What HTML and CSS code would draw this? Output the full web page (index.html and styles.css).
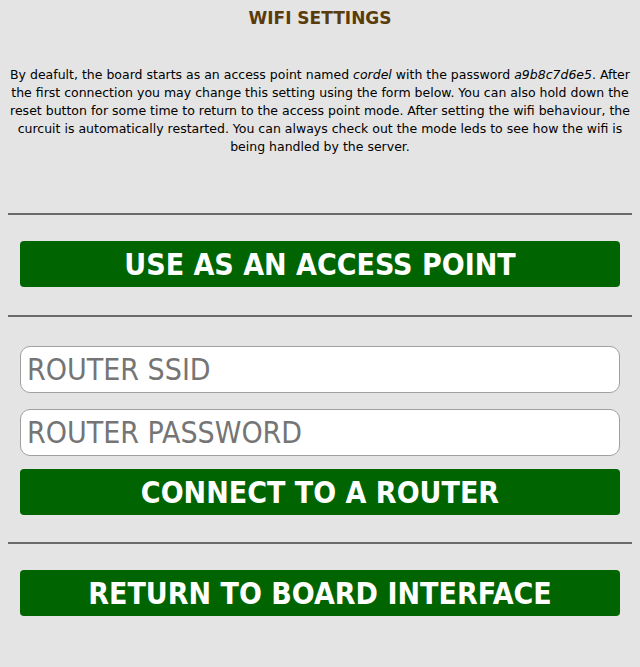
FILE: index.html
```html
<!DOCTYPE html>
<html>
<head>
<meta charset="utf-8">
<link rel="stylesheet" href="styles.css">
</head>
<body>
<div class="page">
  <h1 class="title">WIFI SETTINGS</h1>
  <p class="intro">By deafult, the board starts as an access point named <i>cordel</i> with the password <i>a9b8c7d6e5</i>. After the first connection you may change this setting using the form below. You can also hold down the reset button for some time to return to the access point mode. After setting the wifi behaviour, the curcuit is automatically restarted. You can always check out the mode leds to see how the wifi is being handled by the server.</p>
  <hr class="sep first">
  <div class="block">
    <button class="btn">USE AS AN ACCESS POINT</button>
  </div>
  <hr class="sep">
  <form class="form">
    <input class="field" type="text" placeholder="ROUTER SSID">
    <input class="field" type="text" placeholder="ROUTER PASSWORD">
    <button class="btn" type="button">CONNECT TO A ROUTER</button>
  </form>
  <hr class="sep">
  <div class="block">
    <button class="btn">RETURN TO BOARD INTERFACE</button>
  </div>
</div>
</body>
</html>
```

FILE: styles.css
```css
html, body {
  margin: 0;
  padding: 0;
  background: #e4e4e4;
}
body {
  font-family: "DejaVu Sans", sans-serif;
  color: #000;
}
.page {
  padding: 0 8px;
}
.title {
  margin: 0;
  padding-top: 8px;
  text-align: center;
  font-size: 17px;
  font-weight: bold;
  line-height: 20px;
  color: #5a3c0c;
}
.intro {
  margin: 38px 0 0;
  font-size: 12.5px;
  line-height: 18px;
  text-align: center;
}
.sep {
  margin: 0;
  border: 0;
  height: 2px;
  background: #6a6a6a;
}
.sep.first {
  margin-top: 57px;
}
.block {
  padding: 26px 12px 28px;
}
.form {
  display: flex;
  flex-direction: column;
  padding: 29px 12px 27px;
}
.btn {
  display: block;
  width: 100%;
  height: 46px;
  margin: 0;
  border: 0;
  border-radius: 4px;
  background: #006400;
  color: #fff;
  font-family: "DejaVu Sans Condensed", "DejaVu Sans", sans-serif;
  font-weight: bold;
  font-size: 30px;
  padding: 0;
}
.field {
  display: block;
  box-sizing: border-box;
  width: 100%;
  height: 47px;
  margin: 0 0 16px;
  border: 1px solid #a0a0a0;
  border-radius: 10px;
  background: #fff;
  padding: 0 6px;
  font-family: "DejaVu Sans Condensed", "DejaVu Sans", sans-serif;
  font-size: 30px;
}
.field + .btn {
  margin-top: -3px;
}
.field::placeholder {
  color: #757575;
}
```
